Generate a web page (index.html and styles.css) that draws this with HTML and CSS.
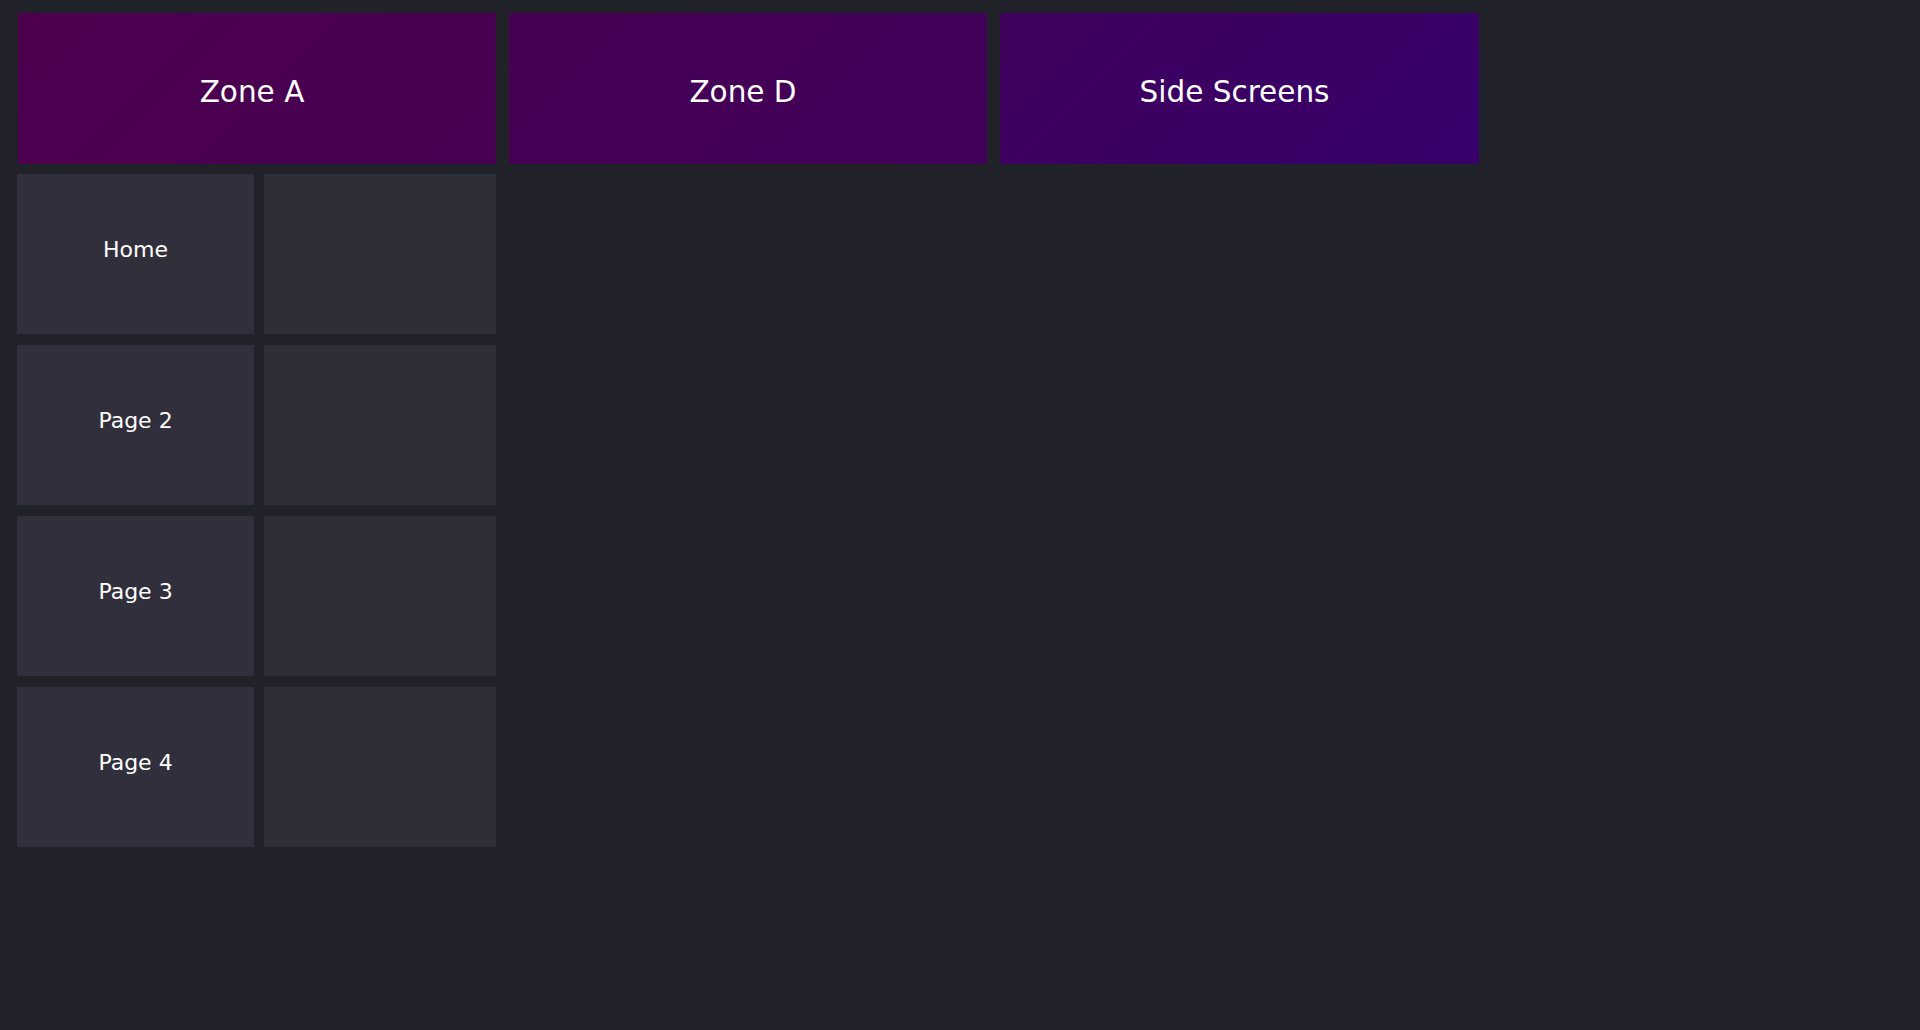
FILE: index.html
```html
<!DOCTYPE html>
<html>
<head>
<meta charset="utf-8">
<link rel="stylesheet" href="styles.css">
</head>
<body>
<div class="app">
  <div class="zones">
    <div class="zone zone-a">Zone A</div>
    <div class="zone zone-d">Zone D</div>
    <div class="zone zone-s">Side Screens</div>
  </div>
  <div class="pages">
    <div class="tile label">Home</div>
    <div class="tile blank"></div>
    <div class="tile label">Page 2</div>
    <div class="tile blank"></div>
    <div class="tile label">Page 3</div>
    <div class="tile blank"></div>
    <div class="tile label">Page 4</div>
    <div class="tile blank"></div>
  </div>
</div>
</body>
</html>
```

FILE: styles.css
```css
html, body {
  margin: 0;
  padding: 0;
  background: #212129;
  height: 100%;
}
body {
  font-family: "DejaVu Sans", "Open Sans", sans-serif;
  color: #ffffff;
}
.app {
  padding: 13px 0 0 17px;
}
.zones {
  display: grid;
  grid-template-columns: 478px 478px 479px;
  column-gap: 13px;
  padding-left: 1px;
}
.zone {
  height: 151px;
  display: flex;
  align-items: center;
  justify-content: center;
  font-size: 29.5px;
  line-height: 1;
  padding-top: 8px;
  padding-right: 10px;
  box-sizing: border-box;
}
.zone-a { background: linear-gradient(135deg, #4d004e, #480052); }
.zone-d { background: linear-gradient(135deg, #460053, #41005a); }
.zone-s { background: linear-gradient(135deg, #40005d, #37006b); }
.pages {
  margin-top: 10px;
  display: grid;
  grid-template-columns: 237px 232px;
  grid-auto-rows: 160px;
  column-gap: 10px;
  row-gap: 11px;
}
.tile {
  display: flex;
  align-items: center;
  justify-content: center;
  font-size: 22px;
  line-height: 1;
  padding-bottom: 8px;
  box-sizing: border-box;
}
.label { background: #302f3b; }
.blank { background: #2e2e38; }
```
